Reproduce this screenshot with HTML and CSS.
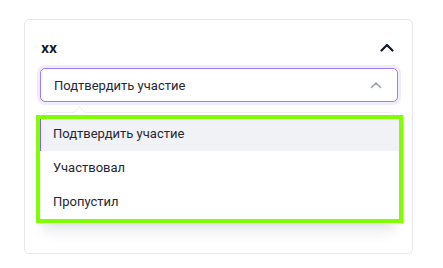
FILE: index.html
```html
<!DOCTYPE html>
<html>
    <head>
        <title>Участие</title>
        <link rel="stylesheet" href="styles.css">
    </head>
    <body>
        <div class="card">
            <div class="cardHeader">
                <span class="cardTitle">xx</span>
                <svg class="collapseIcon" width="14" height="9" viewBox="0 0 14 9"><path d="M1.5 7.5 L7 2 L12.5 7.5" fill="none" stroke="#111827" stroke-width="2.2" stroke-linecap="round" stroke-linejoin="round"/></svg>
            </div>
            <div class="selectWrap">
                <div class="select">
                    <span class="selectValue">Подтвердить участие</span>
                    <svg class="selectArrow" width="12" height="8" viewBox="0 0 12 8"><path d="M1.5 6.5 L6 2 L10.5 6.5" fill="none" stroke="#9ca3af" stroke-width="1.5" stroke-linecap="round" stroke-linejoin="round"/></svg>
                </div>
                <div class="menu">
                    <span class="menuTip"></span>
                    <ul class="optionList">
                        <li class="option selected">Подтвердить участие</li>
                        <li class="option">Участвовал</li>
                        <li class="option">Пропустил</li>
                    </ul>
                </div>
            </div>
        </div>
    </body>
</html>
```

FILE: styles.css
```css
html,body{
    margin: 0;
    padding: 0;
    background-color: #fff;
    font-family: Roboto, "Noto Sans", sans-serif;
    color: #1f2937;
}
.card{
    box-sizing: border-box;
    margin: 19px 0 0 24px;
    width: 389px;
    height: 235px;
    border: 1px solid #e5e7eb;
    border-radius: 5px;
    padding: 0 14px 0 15px;
}
.cardHeader{
    display: flex;
    align-items: center;
    justify-content: space-between;
    height: 26px;
    margin-top: 14px;
    padding: 0 4px 0 1px;
}
.cardTitle{
    font-family: Inter, Roboto, sans-serif;
    font-size: 14px;
    font-weight: 700;
    color: #111827;
}
.selectWrap{
    position: relative;
    margin-top: 8px;
}
.select{
    box-sizing: border-box;
    height: 34px;
    display: flex;
    align-items: center;
    justify-content: space-between;
    padding: 0 15px 0 13px;
    border: 1px solid #a27cf1;
    border-radius: 5px;
    box-shadow: 0 0 0 3px #f1ecfd;
    font-size: 13px;
    color: #27272f;
    background: #fff;
}
.menu{
    position: absolute;
    left: 0;
    top: 44px;
    box-sizing: border-box;
    width: 357px;
    height: 112px;
    border: 1px solid #eceef2;
    border-radius: 8px;
    background: #fff;
    box-shadow: 0 10px 14px -2px rgba(17,24,39,0.08), 0 4px 8px -2px rgba(17,24,39,0.05);
}
.menuTip{
    position: absolute;
    left: 34px;
    top: -5px;
    width: 8px;
    height: 8px;
    background: #fff;
    border-top: 1px solid #eceef2;
    border-left: 1px solid #eceef2;
    transform: rotate(45deg);
}
.optionList{
    list-style: none;
    margin: 6px -3px 0 -1px;
    padding: 0;
    outline: 4px solid #80ff00;
    background: #fff;
    position: relative;
}
.option{
    height: 34px;
    line-height: 34px;
    padding-left: 13px;
    font-size: 13px;
    color: #27272f;
}
.option.selected{
    background: #f1f2f6;
    border-left: 1px solid #8b5cf6;
    padding-left: 12px;
    height: 32px;
    line-height: 30px;
}
```
